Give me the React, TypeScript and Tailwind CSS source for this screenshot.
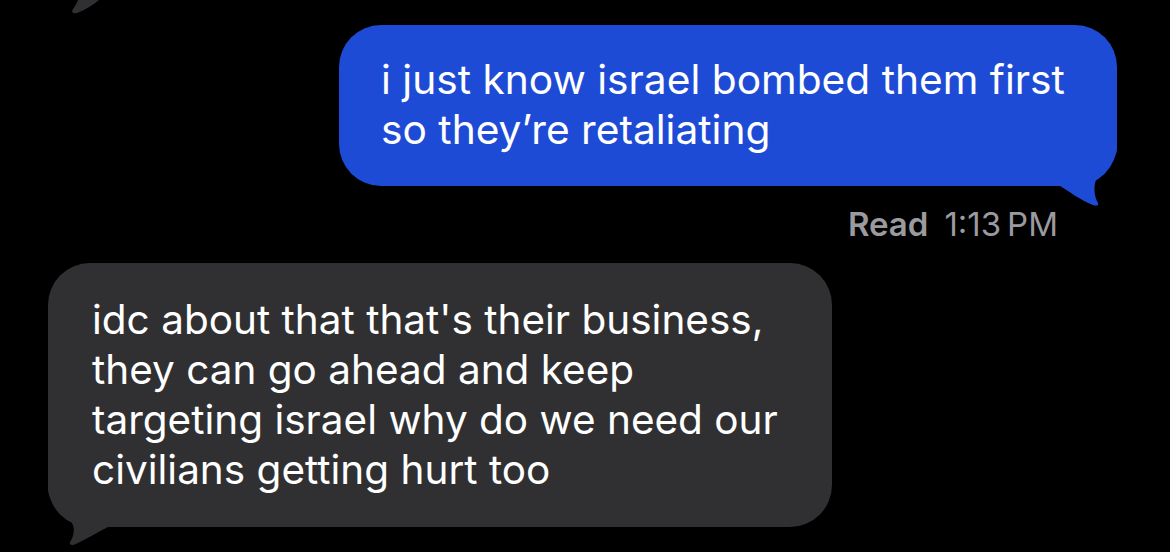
export default function App() {
  return (
    <div
      className="relative flex h-[552px] w-[1170px] flex-col overflow-hidden bg-black"
      style={{ fontFamily: "Inter, 'Liberation Sans', sans-serif" }}
    >
      {/* tail of the bubble above, cut off */}
      <svg className="absolute left-0 top-0" width="120" height="20" viewBox="0 0 120 20">
        <path d="M78,0 L99,0 C93,5 85,10 77,13 C73,14 71,12 73,9 C75,6 77,3 78,0 Z" fill="#303032" />
      </svg>

      <div className="relative mr-[53px] mt-[25px] w-[778px] self-end rounded-[42px] bg-[#1e4bd6] pb-[31px] pl-[42px] pt-[30px] text-[40.7px] leading-[50px] text-white">
        <svg className="absolute left-[700px] top-[100px]" width="90" height="90" viewBox="0 0 90 90">
          <path
            d="M78,20 L78,23 C78,35 66,43 58,53 C54,60 55,71 59,78 C60,81 57,81 54,80 C41,75 31,67 21,61 L11,61 L11,45 L60,45 L60,20 Z"
            fill="#1e4bd6"
          />
        </svg>
        <span className="relative">
          i just know israel bombed them first
          <br />
          so they’re retaliating
        </span>
      </div>

      <div className="mr-[112px] mt-[20px] flex items-baseline self-end text-[33px] leading-[36px] text-[#9a9a9f]">
        <span className="mr-[16px] font-semibold">Read</span>
        <span>1:13&#8201;PM</span>
      </div>

      <div className="relative ml-[48px] mt-[21px] w-[784px] rounded-[42px] bg-[#303032] pb-[32px] pl-[44px] pt-[32px] text-[40.5px] leading-[50px] text-white">
        <svg className="absolute left-[-8px] top-[207px]" width="90" height="80" viewBox="0 0 90 80">
          <path
            d="M8,15 L8,20 C10,35 22,42 30,50 C36,57 34,66 30,72 C29,75 32,76 36,74 C48,68 58,62 68,57 L80,57 L80,40 L40,40 L40,15 Z"
            fill="#303032"
          />
        </svg>
        <span className="relative">
          idc about that that's their business,
          <br />
          they can go ahead and keep
          <br />
          targeting israel why do we need our
          <br />
          civilians getting hurt too
        </span>
      </div>
    </div>
  );
}
